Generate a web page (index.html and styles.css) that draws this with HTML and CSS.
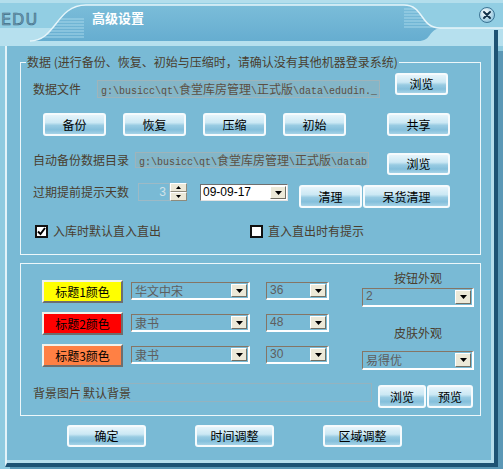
FILE: index.html
```html
<!DOCTYPE html>
<html lang="zh-CN">
  <head>
    <meta charset="UTF-8" />
    <title>高级设置</title>
    <link rel="stylesheet" href="styles.css">
  </head>
  <body>
    <div class="window">
      <div class="titlebar">
        <svg class="frame-art" width="503" height="46" viewBox="0 0 503 46">
          <defs>
            <linearGradient id="tabShade" x1="0" y1="0" x2="0" y2="1">
              <stop offset="0" stop-color="#7bbdd9" />
              <stop offset="1" stop-color="#66add0" />
            </linearGradient>
            <radialGradient id="knob" cx="0.4" cy="0.35" r="0.75">
              <stop offset="0" stop-color="#ffffff" />
              <stop offset="1" stop-color="#7cbad7" />
            </radialGradient>
            <clipPath id="tabClip">
              <path d="M30 41 C56 41 56 5 86 5 L404 5 C424 5 420 28 440 28 C428 30 432 41 418 41 Z" />
            </clipPath>
          </defs>
          <rect width="503" height="46" fill="#92cee3" />
          <rect width="503" height="3" fill="#b3deec" />
          <rect y="28" width="503" height="18" fill="#b6e0ee" />
          <path d="M30 41 C56 41 56 5 86 5 L404 5 C424 5 420 28 440 28 C428 30 432 41 418 41 Z" fill="url(#tabShade)" />
          <!-- ribbed ends of the tab -->
          <g clip-path="url(#tabClip)" stroke="#a6d7ea" stroke-width="1">
            <path d="M40 19h44M40 22h44M40 25h44M40 28h44M40 31h44M40 34h44M40 37h44" />
            <path d="M404 9h30M404 12h30M404 15h30M404 18h30M404 21h30M404 24h30M404 27h30" />
          </g>
          <path d="M30 41 C56 41 56 5 86 5 L404 5 C424 5 420 28 440 28 L503 28" fill="none" stroke="#e6f5fa" stroke-width="1.5" />
          <text class="logo" x="1" y="25">EDU</text>
          <rect x="494" y="30" width="4" height="16" fill="#1e5374" />
          <circle cx="487" cy="15" r="7.5" fill="url(#knob)" stroke="#3c7595" />
          <path d="M484 12l6 6M490 12l-6 6" stroke="#13324a" stroke-width="2" stroke-linecap="round" />
        </svg>
        <span class="title">高级设置</span>
      </div>

      <div class="body">
        <fieldset class="group data-group">
          <legend>数据 (进行备份、恢复、初始与压缩时，请确认没有其他机器登录系统)</legend>

          <div class="row row-file">
            <span class="label file-label">数据文件</span>
            <div class="path file-path">g:\busicc\qt\<span class="zh">食堂库房管理</span>\<span class="zh">正式版</span>\data\edudin._</div>
            <button class="btn file-browse">浏览</button>
          </div>

          <div class="row row-actions">
            <button class="btn">备份</button>
            <button class="btn">恢复</button>
            <button class="btn">压缩</button>
            <button class="btn">初始</button>
            <button class="btn share">共享</button>
          </div>

          <div class="row row-dir">
            <span class="label dir-label">自动备份数据目录</span>
            <div class="path dir-path">g:\busicc\qt\<span class="zh">食堂库房管理</span>\<span class="zh">正式版</span>\datab</div>
            <button class="btn dir-browse">浏览</button>
          </div>

          <div class="row row-expire">
            <span class="label expire-label">过期提前提示天数</span>
            <div class="spin-value">3</div>
            <div class="spin">
              <span class="spin-btn"><svg width="5" height="3"><path d="M0 3h5L2.5 0z" /></svg></span>
              <span class="spin-btn"><svg width="5" height="3"><path d="M0 0h5L2.5 3z" /></svg></span>
            </div>
            <div class="date-box">
              <span class="date-text">09-09-17</span>
              <span class="drop"><svg width="7" height="4"><path d="M0 0h7L3.5 4z" /></svg></span>
            </div>
            <button class="btn clean">清理</button>
            <button class="btn clean-stale">呆货清理</button>
          </div>

          <div class="row row-checks">
            <label class="check-item first">
              <span class="check"><svg width="9" height="9" viewBox="0 0 9 9"><path d="M1 4.5l2.5 2.5 4.5-6" fill="none" stroke="#000" stroke-width="2" /></svg></span>
              入库时默认直入直出
            </label>
            <label class="check-item">
              <span class="check"></span>
              直入直出时有提示
            </label>
          </div>
        </fieldset>

        <div class="group style-group">
          <div class="style-top">
            <div class="colors">
              <div class="color-row">
                <button class="swatch yellow">标题1颜色</button>
                <div class="combo font-combo"><span class="value">华文中宋</span><span class="drop"><svg width="7" height="4"><path d="M0 0h7L3.5 4z" /></svg></span></div>
                <div class="combo size-combo"><span class="value num">36</span><span class="drop"><svg width="7" height="4"><path d="M0 0h7L3.5 4z" /></svg></span></div>
              </div>
              <div class="color-row">
                <button class="swatch red">标题2颜色</button>
                <div class="combo font-combo"><span class="value">隶书</span><span class="drop"><svg width="7" height="4"><path d="M0 0h7L3.5 4z" /></svg></span></div>
                <div class="combo size-combo"><span class="value num">48</span><span class="drop"><svg width="7" height="4"><path d="M0 0h7L3.5 4z" /></svg></span></div>
              </div>
              <div class="color-row">
                <button class="swatch orange">标题3颜色</button>
                <div class="combo font-combo"><span class="value">隶书</span><span class="drop"><svg width="7" height="4"><path d="M0 0h7L3.5 4z" /></svg></span></div>
                <div class="combo size-combo"><span class="value num">30</span><span class="drop"><svg width="7" height="4"><path d="M0 0h7L3.5 4z" /></svg></span></div>
              </div>
            </div>

            <div class="looks">
              <span class="cap">按钮外观</span>
              <div class="combo wide-combo"><span class="value num">2</span><span class="drop"><svg width="7" height="4"><path d="M0 0h7L3.5 4z" /></svg></span></div>
              <span class="cap skin-cap">皮肤外观</span>
              <div class="combo wide-combo skin-combo"><span class="value">易得优</span><span class="drop"><svg width="7" height="4"><path d="M0 0h7L3.5 4z" /></svg></span></div>
            </div>
          </div>

          <div class="bg-row">
            <span class="label bg-label">背景图片</span>
            <div class="bg-path">默认背景</div>
            <button class="btn bg-browse">浏览</button>
            <button class="btn bg-preview">预览</button>
          </div>
        </div>

        <div class="actions">
          <button class="btn wide">确定</button>
          <button class="btn wide">时间调整</button>
          <button class="btn wide">区域调整</button>
        </div>
      </div>
    </div>
  </body>
</html>
```

FILE: styles.css
```css
body {
  margin: 0;
  font-family: "Noto Sans CJK SC", sans-serif;
  font-size: 12px;
  background: #8fcbe0;
}
.window {
  width: 503px;
  height: 469px;
  overflow: hidden;
  background: #8fcbe0;
}

/* title bar */
.titlebar {
  position: relative;
  height: 46px;
}
.frame-art {
  position: absolute;
  left: 0;
  top: 0;
}
.logo {
  font-family: "DejaVu Sans", sans-serif;
  font-size: 16px;
  letter-spacing: 1px;
  fill: #6f9db5;
  stroke: #3f6d86;
  stroke-width: 0.6;
}
.title {
  position: relative;
  display: block;
  padding: 9px 0 0 92px;
  line-height: 18px;
  font-size: 13px;
  font-weight: bold;
  color: #ffffff;
}

/* main panel */
.body {
  height: 421px;
  box-sizing: border-box;
  margin: 0 5px 0 5px;
  border-left: 2px solid #e2f3f9;
  border-right: 4px solid #1e5374;
  border-bottom: 4px solid #1e5374;
  background: #79bad5;
  box-shadow: inset -3px -3px 0 #b6deec, 5px 5px 0 #5b98b6;
  overflow: hidden;
}
.group {
  width: 461px;
  box-sizing: border-box;
  margin: 8px 0 0 13px;
  padding: 0;
  border: 1px solid #edf7fa;
  min-inline-size: 0;
}
.data-group {
  height: 201px;
}
legend {
  margin-left: 5px;
  padding: 0 1px;
  line-height: 16px;
  color: #4a3e2f;
}
.row {
  display: flex;
  align-items: flex-start;
  padding-left: 12px;
}
.label {
  flex: none;
  color: #4a3e2f;
  line-height: 18px;
  white-space: nowrap;
}

/* glossy buttons */
.btn {
  flex: none;
  box-sizing: border-box;
  width: 63px;
  height: 23px;
  padding: 0;
  border: 2px solid #f6fbfd;
  border-radius: 3px;
  background: linear-gradient(#e6f4fa 0%, #cbe8f4 40%, #98cbe2 55%, #84bfdb 78%, #a6d3e7 100%);
  font-family: inherit;
  font-size: 12px;
  color: #000;
  line-height: 18px;
}

/* path fields */
.path {
  flex: none;
  box-sizing: border-box;
  height: 18px;
  padding-left: 3px;
  border: 1px solid #9fb4ba;
  background: #84b6c8;
  font-family: "Liberation Mono", monospace;
  font-size: 10px;
  line-height: 16px;
  color: #5c4f42;
  white-space: nowrap;
  overflow: hidden;
}
.path .zh {
  font-family: "Noto Sans CJK SC", sans-serif;
  font-size: 12px;
}

.row-file {
  margin-top: 2px;
}
.file-label {
  width: 64px;
  margin-top: 8px;
}
.file-path {
  width: 283px;
  margin-top: 8px;
}
.file-browse {
  width: 53px;
  height: 22px;
  margin: 1px 0 0 15px;
}

.row-actions {
  margin-top: 15px;
  padding-left: 22px;
  gap: 17px;
}
.row-actions .share {
  margin-left: 24px;
}

.row-dir {
  margin-top: 16px;
}
.dir-label {
  width: 102px;
  line-height: 16px;
}
.dir-path {
  width: 234px;
  height: 16px;
  line-height: 14px;
}
.dir-browse {
  height: 22px;
  margin: 1px 0 0 18px;
}

.row-expire {
  margin-top: 8px;
}
.expire-label {
  width: 105px;
}
.spin-value {
  box-sizing: border-box;
  width: 32px;
  height: 18px;
  padding-right: 3px;
  border: 1px solid #9dbac6;
  text-align: right;
  font-family: "Liberation Sans", sans-serif;
  line-height: 16px;
  color: #d2e2e8;
}
.spin {
  display: flex;
  flex-direction: column;
  width: 17px;
  height: 18px;
}
.spin-btn {
  flex: 1;
  display: flex;
  align-items: center;
  justify-content: center;
  background: #ece9d8;
  border: 1px solid;
  border-color: #ffffff #8e8b7c #8e8b7c #ffffff;
}
.date-box {
  display: flex;
  box-sizing: border-box;
  width: 88px;
  height: 17px;
  margin: 1px 0 0 13px;
  background: #ffffff;
  border: 1px solid;
  border-color: #6f6f6f #e4e4e4 #e4e4e4 #6f6f6f;
}
.date-text {
  flex: 1;
  padding-left: 2px;
  font-family: "Liberation Sans", sans-serif;
  font-size: 12px;
  line-height: 15px;
  color: #000;
}
.clean {
  margin: 2px 0 0 11px;
}
.clean-stale {
  width: 87px;
  margin: 2px 0 0 1px;
}

.row-checks {
  margin-top: 15px;
  padding-left: 14px;
}
.check-item {
  display: flex;
  align-items: center;
  gap: 5px;
  line-height: 16px;
  color: #4a3e2f;
}
.check-item.first {
  width: 215px;
}
.check {
  display: flex;
  align-items: center;
  justify-content: center;
  box-sizing: border-box;
  width: 13px;
  height: 13px;
  border: 2px solid #111;
  background: #fff;
}

/* title style group */
.style-group {
  height: 153px;
}
.style-top {
  display: flex;
  align-items: flex-start;
  padding: 6px 0 0 21px;
}
.colors {
  display: flex;
  flex-direction: column;
  gap: 9px;
  margin-top: 10px;
}
.color-row {
  display: flex;
  align-items: flex-start;
}
.swatch {
  box-sizing: border-box;
  width: 81px;
  height: 23px;
  padding: 0;
  border: 2px solid;
  border-color: #f2f2ea #6e6e6e #6e6e6e #f2f2ea;
  font-family: inherit;
  font-size: 12px;
  line-height: 18px;
  color: #000;
}
.yellow { background: #ffff00; }
.red { background: #ff0000; }
.orange { background: #ff8044; }

.combo {
  display: flex;
  box-sizing: border-box;
  height: 18px;
  margin-top: 2px;
  border-style: solid;
  border-width: 1px 2px 2px 1px;
  border-color: #857565 #ffffff #ffffff #857565;
}
.combo .value {
  flex: 1;
  padding-left: 3px;
  line-height: 15px;
  color: #5e5e5e;
  white-space: nowrap;
}
.combo .num {
  font-family: "Liberation Sans", sans-serif;
}
.drop {
  flex: none;
  display: flex;
  align-items: center;
  justify-content: center;
  box-sizing: border-box;
  width: 16px;
  margin: 1px;
  background: #ece9d8;
  border: 1px solid;
  border-color: #ffffff #716f64 #716f64 #ffffff;
}
.font-combo {
  width: 119px;
  margin-left: 8px;
}
.size-combo {
  width: 63px;
  margin-left: 16px;
}
.looks {
  display: flex;
  flex-direction: column;
  width: 112px;
  margin-left: 33px;
}
.cap {
  text-align: center;
  line-height: 16px;
  color: #4a3e2f;
}
.wide-combo {
  height: 19px;
  margin-top: 2px;
}
.skin-cap {
  margin-top: 18px;
}
.skin-combo {
  margin-top: 10px;
}

.bg-row {
  display: flex;
  align-items: flex-start;
  margin-top: 13px;
  padding-left: 12px;
}
.bg-label {
  width: 47px;
  line-height: 19px;
}
.bg-path {
  box-sizing: border-box;
  width: 292px;
  height: 19px;
  padding-left: 2px;
  border: 1px solid #94b3bf;
  line-height: 17px;
  color: #4a3e2f;
}
.bg-browse {
  width: 48px;
  margin: 2px 0 0 6px;
}
.bg-preview {
  width: 46px;
  margin: 2px 0 0 1px;
}

/* dialog buttons */
.actions {
  display: flex;
  gap: 49px;
  margin-top: 9px;
  padding-left: 60px;
}
.btn.wide {
  width: 79px;
  height: 22px;
}
```
